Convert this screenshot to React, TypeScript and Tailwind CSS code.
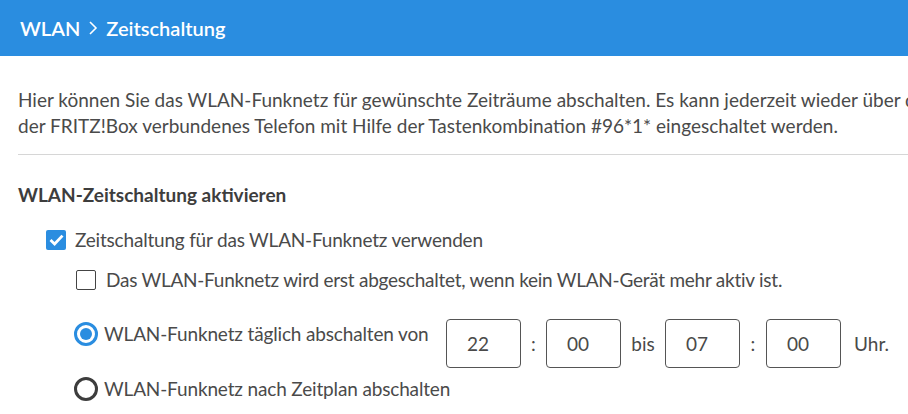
import React from 'react';

const blue = 'bg-[#2a8de0]';

const TimeBox = ({ value }: { value: string }) => (
  <div className="w-[75px] h-[49px] border border-[#555] rounded-[4px] flex items-center pl-[20px] text-[19px] text-[#4a4a4a]">
    {value}
  </div>
);

export default function App() {
  return (
    <div
      className="w-[908px] h-[414px] overflow-hidden bg-white text-[#4a4a4a]"
      style={{ fontFamily: 'Lato, "Open Sans", sans-serif' }}
    >
      {/* Header */}
      <div className={`h-[56px] ${blue} flex items-center pl-[20px] text-white text-[20px] font-semibold`}>
        <span>WLAN</span>
        <svg className="mx-[8px]" width="10" height="14" viewBox="0 0 10 14" fill="none">
          <path d="M2 1 L8 7 L2 13" stroke="white" strokeWidth="1.6" />
        </svg>
        <span>Zeitschaltung</span>
      </div>

      <div className="pl-[18px]">
        {/* Intro */}
        <p className="pt-[31px] text-[19px] leading-[26px] whitespace-nowrap">
          Hier können Sie das WLAN-Funknetz für gewünschte Zeiträume abschalten. Es kann jederzeit wieder über die Taste an der FRITZ!Box oder über ein mit
          <br />
          der FRITZ!Box verbundenes Telefon mit Hilfe der Tastenkombination #96*1* eingeschaltet werden.
        </p>
        <div className="mt-[15px] border-t border-[#d6d6d6]" />

        {/* Section */}
        <h2 className="mt-[27px] text-[19px] leading-[26px] font-bold text-[#3d3d3d]">
          WLAN-Zeitschaltung aktivieren
        </h2>

        <label className="mt-[19px] ml-[28px] flex items-center gap-[9px] text-[19px] leading-[26px] tracking-[-0.2px]">
          <span className={`w-[20px] h-[20px] rounded-[2px] ${blue} flex items-center justify-center`}>
            <svg width="15" height="12" viewBox="0 0 15 12" fill="none">
              <path d="M1.5 6 L5.6 10 L13.5 1.6" stroke="white" strokeWidth="2.8" />
            </svg>
          </span>
          Zeitschaltung für das WLAN-Funknetz verwenden
        </label>

        <label className="mt-[14px] ml-[58px] flex items-center gap-[10px] text-[19px] leading-[26px] tracking-[-0.25px]">
          <span className="w-[20px] h-[20px] rounded-[2px] border border-[#444] bg-white" />
          Das WLAN-Funknetz wird erst abgeschaltet, wenn kein WLAN-Gerät mehr aktiv ist.
        </label>

        <div className="mt-[26px] ml-[56px] flex items-start text-[19px] leading-[26px]">
          <label className="w-[372px] pt-[2px] flex items-center gap-[6px] tracking-[-0.15px]">
            <span className="w-[24px] h-[24px] rounded-full border-[3px] border-[#2a8de0] flex items-center justify-center">
              <span className={`w-[12px] h-[12px] rounded-full ${blue}`} />
            </span>
            WLAN-Funknetz täglich abschalten von
          </label>
          <TimeBox value="22" />
          <span className="w-[25px] h-[49px] flex items-center justify-center">:</span>
          <TimeBox value="00" />
          <span className="w-[44px] h-[49px] flex items-center justify-center">bis</span>
          <TimeBox value="07" />
          <span className="w-[26px] h-[49px] flex items-center justify-center">:</span>
          <TimeBox value="00" />
          <span className="ml-[13px] h-[49px] flex items-center">Uhr.</span>
        </div>

        <label className="mt-[8px] ml-[56px] flex items-center gap-[6px] text-[19px] leading-[26px] tracking-[-0.15px]">
          <span className="w-[24px] h-[24px] rounded-full border-[3px] border-[#3d3d3d]" />
          WLAN-Funknetz nach Zeitplan abschalten
        </label>
      </div>
    </div>
  );
}
